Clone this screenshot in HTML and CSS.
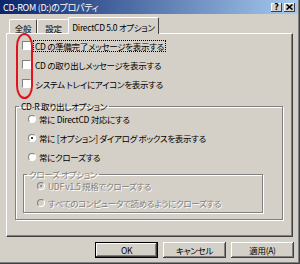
FILE: index.html
```html
<!DOCTYPE html>
<html lang="ja">
<head>
    <meta charset="UTF-8">
    <title>CD-ROM (D:)のプロパティ</title>
    <link rel="stylesheet" href="styles.css">
</head>
<body>
    <div class="window">
        <div class="titlebar">
            <span class="title">CD-ROM (D:)のプロパティ</span>
            <div class="title-buttons">
                <span class="tbtn">?</span>
                <span class="tbtn">
                    <svg width="7" height="6" viewBox="0 0 7 6"><path d="M0.5 0.5 L6.5 5.5 M6.5 0.5 L0.5 5.5" stroke="#000" stroke-width="1.6"/></svg>
                </span>
            </div>
        </div>

        <div class="tabs">
            <div class="tab">全般</div>
            <div class="tab">設定</div>
            <div class="tab active">DirectCD 5.0 オプション</div>
        </div>

        <div class="panel">
            <div class="checks">
                <div class="check"><span class="box"></span><span class="label focus">CD の準備完了メッセージを表示する</span></div>
                <div class="check"><span class="box"></span><span class="label">CD の取り出しメッセージを表示する</span></div>
                <div class="check"><span class="box"></span><span class="label">システム トレイにアイコンを表示する</span></div>
            </div>

            <fieldset class="group">
                <legend>CD-R 取り出しオプション</legend>
                <div class="options">
                    <div class="radio"><span class="dot"></span>常に DirectCD 対応にする</div>
                    <div class="radio"><span class="dot on"></span>常に [オプション] ダイアログ ボックスを表示する</div>
                    <div class="radio"><span class="dot"></span>常にクローズする</div>
                </div>

                <fieldset class="group inner disabled">
                    <legend>クローズ オプション</legend>
                    <div class="options">
                        <div class="radio"><span class="dot on"></span>UDF v1.5 規格でクローズする</div>
                        <div class="radio"><span class="dot"></span>すべてのコンピュータで読めるようにクローズする</div>
                    </div>
                </fieldset>
            </fieldset>
        </div>

        <div class="buttons">
            <div class="btn default">OK</div>
            <div class="btn">キャンセル</div>
            <div class="btn">適用(A)</div>
        </div>

        <div class="mark"></div>
    </div>
</body>
</html>
```

FILE: styles.css
```css
body {
    margin: 0;
    background: #d4d0c8;
    font-family: "Noto Sans CJK JP", sans-serif;
    font-size: 8.5px;
    letter-spacing: -0.3px;
    font-feature-settings: "palt";
    color: #000;
}

.window {
    position: relative;
    width: 300px;
    height: 264px;
    box-sizing: border-box;
    background: #d4d0c8;
    border-right: 1px solid #404040;
    border-bottom: 1px solid #404040;
    box-shadow: inset -1px -1px 0 #808080;
    display: flex;
    flex-direction: column;
}

.titlebar {
    height: 14px;
    margin-right: 1px;
    padding: 0 3px 0 3px;
    display: flex;
    align-items: center;
    justify-content: space-between;
    background: linear-gradient(to right, #0a246a, #a6caf0);
    color: #fff;
    font-size: 9px;
}

.title-buttons {
    display: flex;
    gap: 2px;
}

.tbtn {
    width: 11px;
    height: 9px;
    display: flex;
    align-items: center;
    justify-content: center;
    background: #d4d0c8;
    box-shadow: inset -1px -1px 0 #404040, inset 1px 1px 0 #fff;
    font: bold 8px "DejaVu Sans", sans-serif;
    color: #000;
}

.tabs {
    height: 16px;
    margin-top: 3px;
    padding-left: 9px;
    display: flex;
    align-items: flex-end;
}

.tab {
    height: 14px;
    box-sizing: border-box;
    padding: 3px 0 0 0;
    text-align: center;
    white-space: nowrap;
    line-height: 10px;
    border-left: 1px solid #fff;
    border-top: 1px solid #fff;
    border-right: 1px solid #404040;
    border-radius: 2px 2px 0 0;
}

.tab:nth-child(1) {
    width: 28px;
}

.tab:nth-child(2) {
    width: 33px;
}

.tab.active {
    position: relative;
    z-index: 1;
    width: 91px;
    height: 17px;
    margin-left: -2px;
    margin-bottom: -1px;
    padding-top: 4px;
    background: #d4d0c8;
}

.panel {
    height: 204px;
    margin-left: 6px;
    width: 287px;
    box-sizing: border-box;
    border-left: 1px solid #fff;
    border-top: 1px solid #fff;
    border-right: 1px solid #404040;
    border-bottom: 1px solid #404040;
    box-shadow: inset -1px -1px 0 #808080;
}

.checks {
    padding: 2px 0 0 15px;
    display: flex;
    flex-direction: column;
}

.check {
    height: 19px;
    display: flex;
    align-items: center;
    gap: 2px;
}

.box {
    width: 7px;
    height: 7px;
    background: #fff;
    border: 1px solid;
    border-color: #808080 #fff #fff #808080;
}

.label {
    line-height: 10px;
    padding: 0 1px;
    border: 1px dotted transparent;
}

.label.focus {
    border-color: #000;
}

.group {
    margin: 8px 9px 0 8px;
    padding: 0 0 6px 0;
    border: 1px solid #808080;
    box-shadow: inset 1px 1px 0 #fff, 1px 1px 0 #fff;
    min-width: 0;
}

.group legend {
    margin-left: 3px;
    padding: 0 2px;
    line-height: 10px;
}

.options {
    margin-top: -2px;
}

.radio {
    height: 19px;
    padding-left: 12px;
    display: flex;
    align-items: center;
    gap: 3px;
}

.dot {
    width: 6px;
    height: 6px;
    border-radius: 50%;
    background: #fff;
    border: 1px solid;
    border-color: #808080 #fff #fff #808080;
    display: flex;
    align-items: center;
    justify-content: center;
}

.dot.on::after {
    content: "";
    width: 2px;
    height: 2px;
    border-radius: 50%;
    background: #000;
}

.group.inner {
    margin: 3px 19px 0 7px;
    padding-bottom: 1px;
}

.inner .radio {
    height: 17px;
    padding-left: 13px;
}

.disabled {
    color: #808080;
}

.disabled legend,
.disabled .radio {
    text-shadow: 1px 1px 0 #fff;
}

.disabled .dot {
    background: #d4d0c8;
}

.disabled .dot.on::after {
    background: #808080;
}

.buttons {
    display: flex;
    justify-content: flex-end;
    gap: 5px;
    padding: 5px 5px 0 0;
}

.btn {
    width: 63px;
    height: 16px;
    box-sizing: border-box;
    display: flex;
    align-items: center;
    justify-content: center;
    background: #d4d0c8;
    box-shadow: inset -1px -1px 0 #404040, inset 1px 1px 0 #fff, inset -2px -2px 0 #808080;
}

.btn.default {
    border: 1px solid #000;
}

.mark {
    position: absolute;
    left: 16px;
    top: 33px;
    width: 13px;
    height: 62px;
    border: 2px solid #e0141e;
    border-radius: 9px / 14px;
}
```
